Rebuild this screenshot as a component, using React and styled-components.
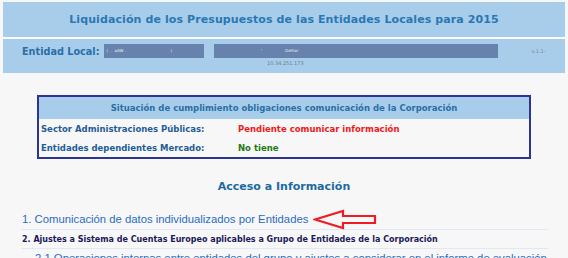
import React from 'react';
import styled, { createGlobalStyle } from 'styled-components';

const GlobalStyle = createGlobalStyle`
  html, body {
    margin: 0;
    padding: 0;
    background: #f7f7f7;
    font-family: 'DejaVu Sans', Verdana, sans-serif;
    overflow: hidden;
  }
`;

const Page = styled.div`
  padding: 2px 3px 0 3px;
`;

const Banner = styled.div`
  background: #a8cdea;
`;

const TitleBar = styled.div`
  height: 35px;
  display: flex;
  align-items: center;
  justify-content: center;
  border-bottom: 2px solid #ffffff;
`;

const Title = styled.h1`
  margin: 0;
  font-size: 11px;
  font-weight: bold;
  color: #2a78b3;
  letter-spacing: 0.1px;
`;

const EntityBar = styled.div`
  height: 34px;
  position: relative;
  display: flex;
  align-items: flex-start;
  padding: 5px 0 0 19px;
  box-sizing: border-box;
`;

const EntityRow = styled.div`
  display: flex;
  align-items: center;
  gap: 4px;
  height: 14px;
`;

const Label = styled.span`
  font-size: 9.7px;
  font-weight: bold;
  color: #2a6fa6;
`;

const Field = styled.div`
  width: ${p => p.$w}px;
  height: 14px;
  background: #6783ad;
  margin-left: ${p => p.$ml || 0}px;
  color: #e8eef7;
  font-size: 4px;
  line-height: 14px;
  padding-left: 3px;
  box-sizing: border-box;
  white-space: nowrap;
  overflow: hidden;
`;

const Version = styled.span`
  font-size: 5px;
  color: #7a8694;
  margin-left: 30px;
`;

const Ip = styled.div`
  position: absolute;
  left: 264px;
  top: 21px;
  font-size: 5px;
  color: #6f7c8a;
`;

const StatusBox = styled.div`
  width: 490px;
  margin: 22px auto 0 auto;
  border: 2px solid #2d3591;
  background: #f7f7f7;
`;

const StatusHead = styled.div`
  background: #a8cdea;
  height: 22px;
  display: flex;
  align-items: center;
  justify-content: center;
  font-size: 8.5px;
  font-weight: bold;
  color: #2a6fa6;
`;

const StatusRow = styled.div`
  display: grid;
  grid-template-columns: 197px 1fr;
  height: 19px;
  align-items: center;
  padding-left: 2px;
  font-size: 8.5px;
  font-weight: bold;
`;

const RowLabel = styled.span`
  color: #1f5d94;
`;

const RowValue = styled.span`
  color: ${p => p.$tone === 'red' ? '#f01818' : '#1d7a12'};
`;

const Section = styled.h2`
  margin: 21px 0 0 0;
  text-align: center;
  font-size: 11px;
  font-weight: bold;
  color: #1e6aa0;
`;

const Menu = styled.ul`
  list-style: none;
  margin: 16px 0 0 18px;
  padding: 0;
  width: 527px;
`;

const Item = styled.li`
  display: flex;
  align-items: center;
  border-bottom: 1px solid #dfe9f5;
  height: ${p => p.$h || 18}px;
  padding-left: ${p => p.$indent || 1}px;
  font-family: ${p => p.$bold ? "'DejaVu Sans', Verdana, sans-serif" : "'Liberation Sans', Arial, sans-serif"};
  font-size: ${p => p.$bold ? '8px' : '11.3px'};
  font-weight: ${p => p.$bold ? 'bold' : 'normal'};
  color: ${p => p.$bold ? '#1a1a58' : '#2a6cc0'};
  white-space: nowrap;
`;

const Arrow = styled.svg`
  margin-left: 5px;
  flex: none;
`;

export default function App() {
  return (
    <>
      <GlobalStyle />
      <Page>
        <Banner>
          <TitleBar>
            <Title>Liquidación de los Presupuestos de las Entidades Locales para 2015</Title>
          </TitleBar>
          <EntityBar>
            <EntityRow>
              <Label>Entidad Local:</Label>
              <Field $w={100}>(&nbsp;&nbsp;.&nbsp;&nbsp;aAW&nbsp;.&nbsp;&nbsp;&nbsp;&nbsp;&nbsp;&nbsp;&nbsp;&nbsp;&nbsp;&nbsp;&nbsp;&nbsp;&nbsp;&nbsp;&nbsp;&nbsp;&nbsp;&nbsp;&nbsp;&nbsp;&nbsp;&nbsp;&nbsp;&nbsp;&nbsp;&nbsp;&nbsp;&nbsp;&nbsp;&nbsp;&nbsp;&nbsp;&nbsp;&nbsp;&nbsp;)</Field>
              <Field $w={284} $ml={6}>&nbsp;&nbsp;&nbsp;&nbsp;&nbsp;&nbsp;&nbsp;&nbsp;&nbsp;&nbsp;&nbsp;&nbsp;&nbsp;&nbsp;&nbsp;&nbsp;&nbsp;&nbsp;&nbsp;&nbsp;&nbsp;&nbsp;&nbsp;&nbsp;&nbsp;&nbsp;&nbsp;&nbsp;&nbsp;&nbsp;&nbsp;&nbsp;&nbsp;&nbsp;&nbsp;'&nbsp;&nbsp;&nbsp;&nbsp;&nbsp;&nbsp;&nbsp;&nbsp;&nbsp;&nbsp;&nbsp;&nbsp;&nbsp;&nbsp;&nbsp;&nbsp;&nbsp;&nbsp;Gelhar</Field>
              <Version>v.1.1-</Version>
            </EntityRow>
            <Ip>10.34.251.173</Ip>
          </EntityBar>
        </Banner>

        <StatusBox>
          <StatusHead>Situación de cumplimiento obligaciones comunicación de la Corporación</StatusHead>
          <StatusRow>
            <RowLabel>Sector Administraciones Públicas:</RowLabel>
            <RowValue $tone="red">Pendiente comunicar información</RowValue>
          </StatusRow>
          <StatusRow>
            <RowLabel>Entidades dependientes Mercado:</RowLabel>
            <RowValue $tone="green">No tiene</RowValue>
          </StatusRow>
        </StatusBox>

        <Section>Acceso a Información</Section>

        <Menu>
          <Item $h={20}>
            1. Comunicación de datos individualizados por Entidades
            <Arrow width="64" height="21" viewBox="0 0 64 21">
              <path d="M2 10.5 L30 2 L30 7 L62 7 L62 14 L30 14 L30 19 Z" fill="none" stroke="#ee1c24" strokeWidth="2.2" strokeLinejoin="miter" />
            </Arrow>
          </Item>
          <Item $bold>2. Ajustes a Sistema de Cuentas Europeo aplicables a Grupo de Entidades de la Corporación</Item>
          <Item $indent={14}>2.1 Operaciones internas entre entidades del grupo y ajustes a considerar en el informe de evaluación</Item>
        </Menu>
      </Page>
    </>
  );
}
